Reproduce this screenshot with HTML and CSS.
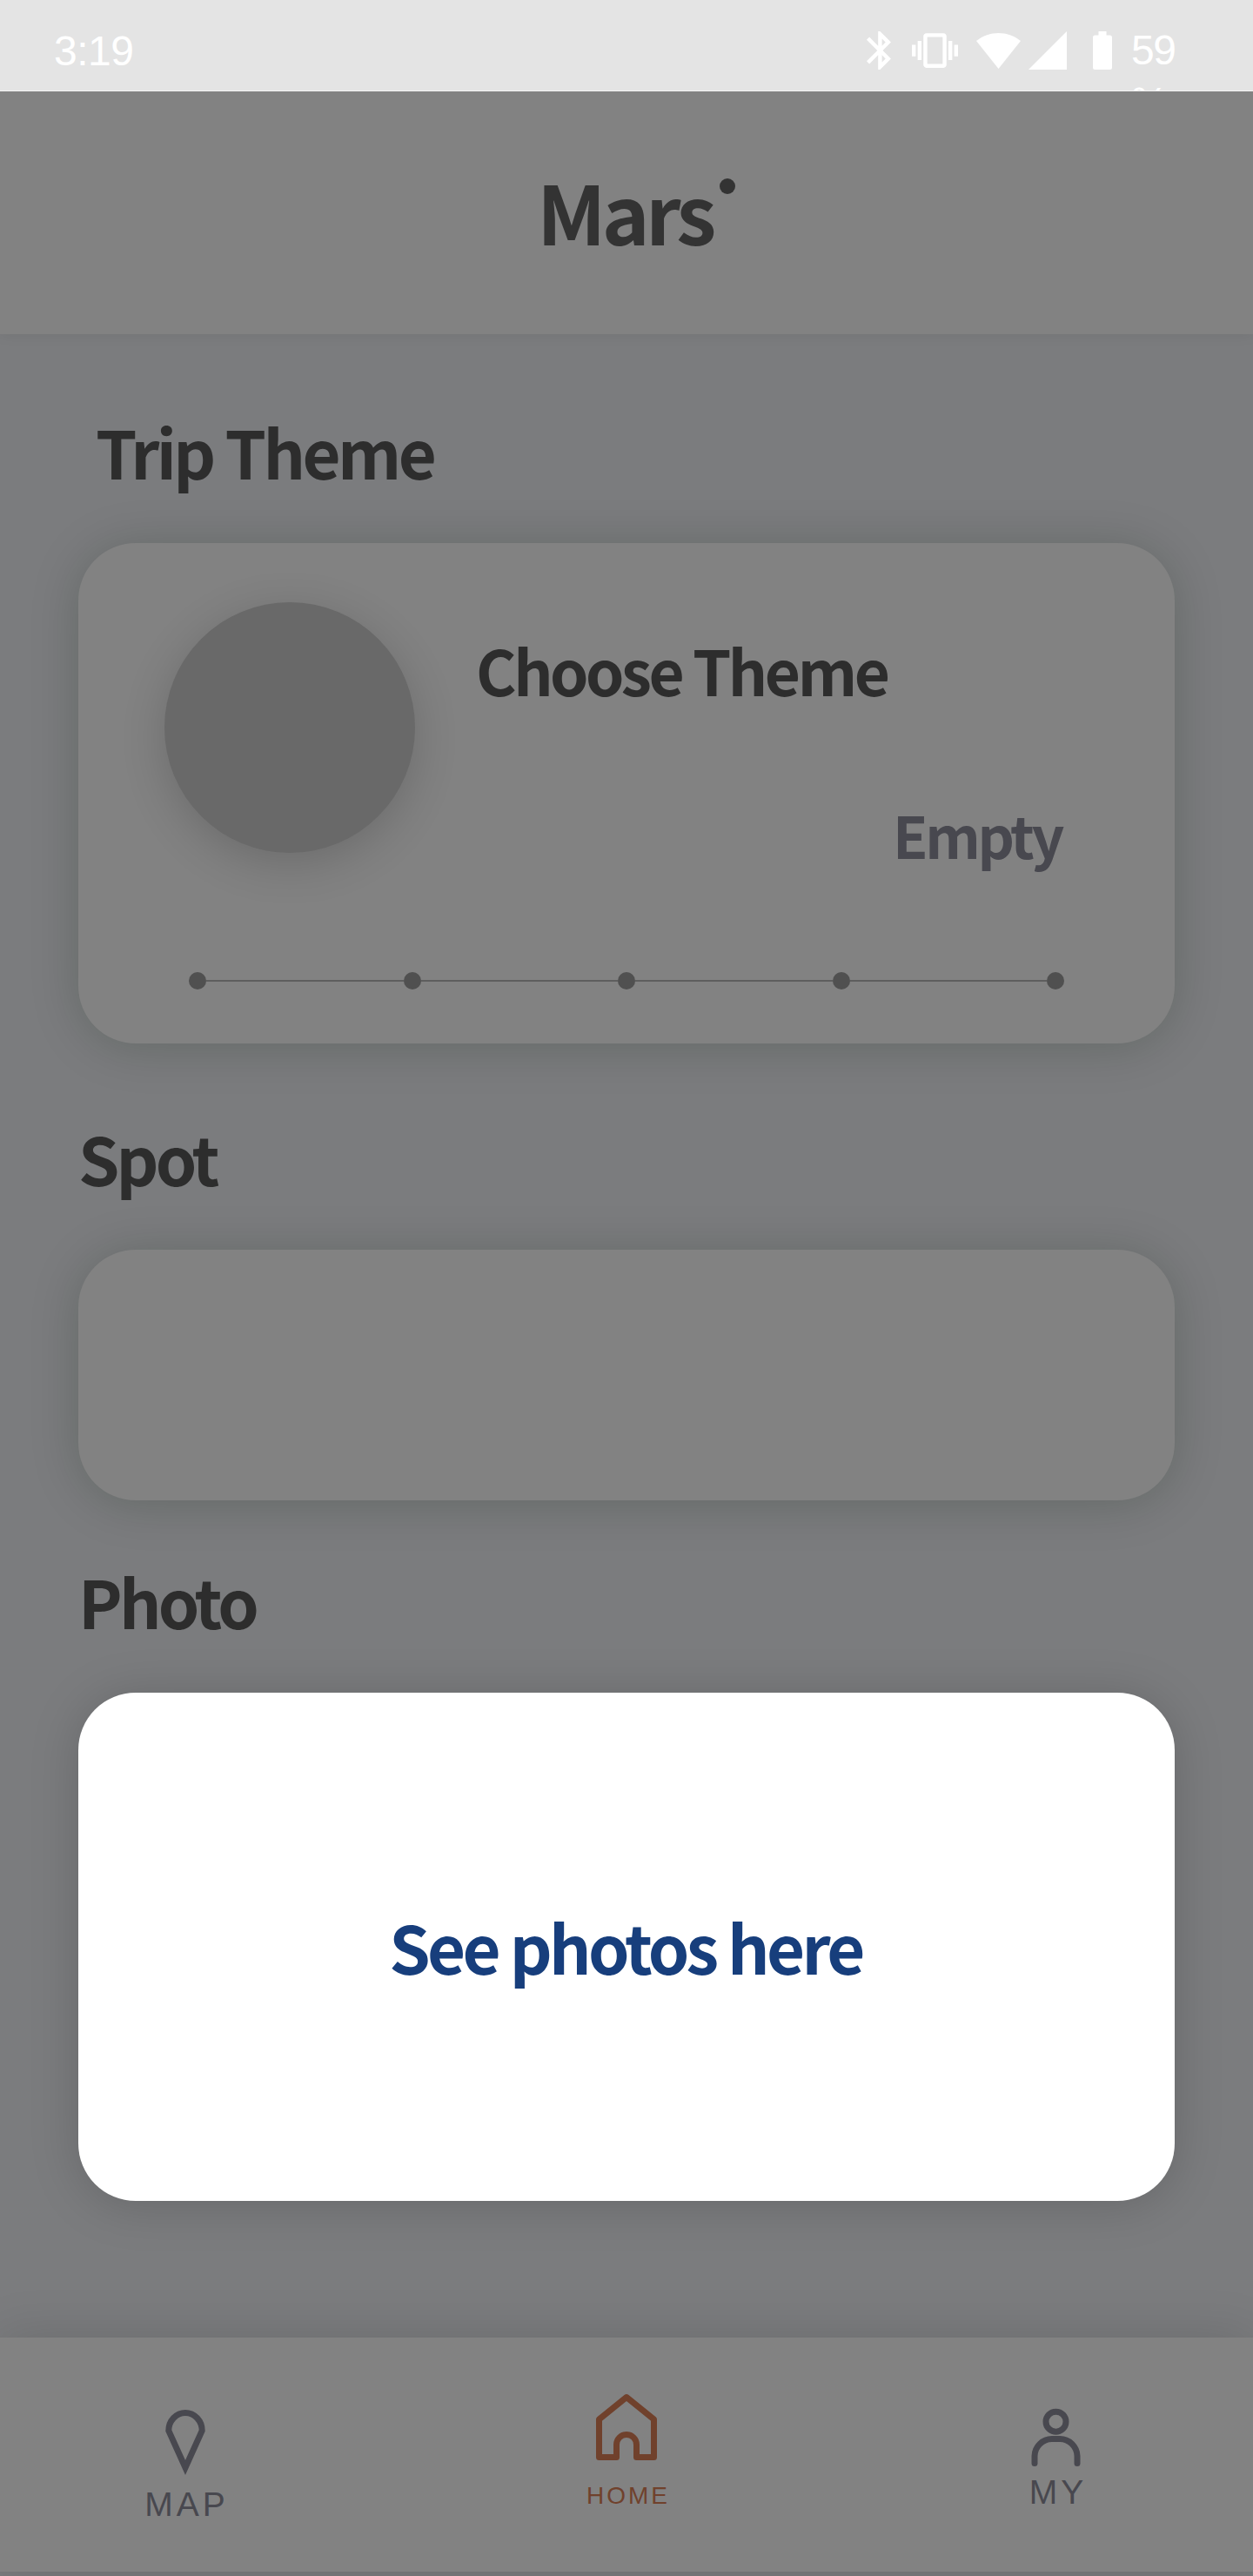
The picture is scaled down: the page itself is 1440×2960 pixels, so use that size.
FILE: index.html
```html
<!DOCTYPE html>
<html lang="en">
<head>
<meta charset="utf-8">
<title>Mars</title>
<link rel="stylesheet" href="styles.css">
</head>
<body>
<div class="status">
  <span class="clock">3:19</span>
  <div class="status-icons">
    <svg class="bluetooth" width="28" height="44" viewBox="5 2 12.730 20"><path fill="#fff" d="M17.710 7.710L12 2h-1v7.590L6.410 5 5 6.410 10.590 12 5 17.590 6.410 19 11 14.410V22h1l5.710-5.710-4.300-4.290 4.300-4.290zM13 5.830l1.880 1.880L13 9.590V5.830zm1.880 10.460L13 18.170v-3.760l1.880 1.880z"/></svg>
    <svg class="vibrate" width="53" height="40" viewBox="0 3 24 18"><path fill="#fff" d="M0 15h2V9H0v6zm3 2h2V7H3v10zm19-8v6h2V9h-2zm-3 8h2V7h-2v10zM16.500 3h-9C6.670 3 6 3.670 6 4.500v15c0 .83.67 1.500 1.500 1.500h9c.83 0 1.500-.67 1.500-1.500v-15c0-.83-.67-1.500-1.500-1.500zM16 19H8V5h8v14z"/></svg>
    <svg class="wifi" width="51" height="41" viewBox="0 0 51 41"><path fill="#fff" d="M0 9C15-3 36-3 51 9L25.500 41Z"/></svg>
    <svg class="signal" width="44" height="44" viewBox="0 0 44 44"><path fill="#fff" d="M44 0V44H0Z"/></svg>
    <svg class="battery" width="22" height="44" viewBox="0 0 22 44"><path fill="#fff" d="M6.500 0h9v4.500H19.500Q22 4.500 22 7v34.500Q22 44 19.500 44h-17Q0 44 0 41.500V7Q0 4.500 2.500 4.500h4Z"/></svg>
    <span class="level">59 %</span>
  </div>
</div>

<header class="header">
  <h1 class="brand">Mars</h1>
  <span class="brand-dot"></span>
</header>

<main class="main">
  <h2 class="heading heading-theme">Trip Theme</h2>
  <section class="card theme">
    <div class="theme-body">
      <div class="avatar"></div>
      <div class="theme-text">
        <p class="theme-name">Choose Theme</p>
        <p class="theme-state">Empty</p>
      </div>
    </div>
    <div class="timeline">
      <i class="dot"></i><i class="bar"></i><i class="dot"></i><i class="bar"></i><i class="dot"></i><i class="bar"></i><i class="dot"></i><i class="bar"></i><i class="dot"></i>
    </div>
  </section>

  <h2 class="heading heading-spot">Spot</h2>
  <section class="card spot"></section>

  <h2 class="heading heading-photo">Photo</h2>
  <section class="card photo"><p class="hint">See photos here</p></section>
</main>

<nav class="nav">
  <a class="tab tab-map">
    <svg width="50" height="80" viewBox="0 0 50 80" fill="none" stroke="currentColor" stroke-width="7"><path d="M5.800 27A19.200 20.500 0 1 1 44.200 27L25 69.500Z"/></svg>
    <span>MAP</span>
  </a>
  <a class="tab tab-home">
    <svg width="74" height="80" viewBox="0 0 74 80" fill="none" stroke="currentColor" stroke-width="7" stroke-linejoin="round"><path d="M37 5.500 68.500 31V74.500H48.500V60A11.500 11.500 0 0 0 25.500 60V74.500H5.500V31Z"/></svg>
    <span>HOME</span>
  </a>
  <a class="tab tab-my">
    <svg width="60" height="70" viewBox="0 0 60 70" fill="none" stroke="currentColor" stroke-width="7" stroke-linecap="round"><circle cx="29.500" cy="16.700" r="11.500"/><path d="M5 64.500V56A20 20 0 0 1 25 36.500H34A20 20 0 0 1 54 56V64.500"/></svg>
    <span>MY</span>
  </a>
</nav>
</body>
</html>
```
FILE: styles.css
```css
* { box-sizing: border-box; }

body {
  margin: 0;
  width: 1440px;
  height: 2960px;
  overflow: hidden;
  display: flex;
  flex-direction: column;
  background: #7b7c7e;
  color: #2d2d2d;
  font-family: "Noto Sans CJK KR", "Noto Sans", sans-serif;
}

h1, h2, p { margin: 0; font-weight: 700; }
svg { display: block; flex: none; }

.status {
  height: 105px;
  flex: none;
  display: flex;
  justify-content: space-between;
  padding: 0 60px 0 62px;
  background: #e4e4e4;
  border-bottom: 1px solid #f4f4f4;
  color: #fff;
  font: 48px/60px "Liberation Sans", Arial, sans-serif;
  overflow: hidden;
  position: relative;
  z-index: 2;
}
.clock { padding-top: 29px; letter-spacing: -0.5px; }
.status-icons { display: flex; align-items: flex-start; }
.bluetooth { margin: 36px 24px 0 0; }
.vibrate { margin: 38px 21px 0 0; }
.wifi { margin: 38px 9px 0 0; }
.signal { margin: 36px 30px 0 0; }
.battery { margin: 36px 22px 0 0; }
.level { width: 80px; padding-top: 28px; letter-spacing: -1.5px; }

.header {
  height: 279px;
  flex: none;
  display: flex;
  align-items: flex-start;
  gap: 10px;
  padding-left: 617px;
  background: #828282;
  box-shadow: 0 0 16px rgba(0, 20, 0, 0.08);
  position: relative;
  z-index: 1;
}
.brand {
  font-size: 93px;
  line-height: 273px;
  letter-spacing: -4.65px;
  width: 200px;
  color: #333;
}
.brand-dot {
  width: 18px;
  height: 18px;
  margin-top: 100px;
  border-radius: 50%;
  background: #333;
}

.main { height: 2302px; flex: none; padding: 79px 90px 0; }
.heading { font-size: 76px; line-height: 110px; margin-bottom: 51px; letter-spacing: -3.8px; }
.heading-theme { padding-left: 20px; letter-spacing: -3.55px; }
.heading-spot { margin-top: 76px; }
.heading-photo { margin-top: 60px; }

.card {
  border-radius: 66px;
  background: #828282;
  box-shadow: 0 4px 56px rgba(0, 28, 0, 0.19);
}
.theme { height: 575px; padding: 68px 127px 0 99px; }
.theme-body { display: flex; gap: 70px; height: 288px; }
.avatar {
  width: 288px;
  height: 288px;
  flex: none;
  border-radius: 50%;
  background: #696969;
  box-shadow: 0 12px 50px rgba(0, 0, 0, 0.17);
}
.theme-text { flex: 1; padding-top: 27px; white-space: nowrap; }
.theme-name { font-size: 71px; line-height: 100px; letter-spacing: -3.45px; }
.theme-state {
  margin-top: 91px;
  padding-left: 479px;
  font-size: 66px;
  line-height: 96px;
  letter-spacing: -3.3px;
  color: #48484f;
}
.timeline { display: flex; align-items: center; margin: 137px 0 0 28px; }
.dot { width: 20px; height: 20px; border-radius: 50%; background: #505050; }
.bar { flex: 1; height: 2px; background: #5e5e5e; }

.spot { height: 288px; }
.photo {
  height: 584px;
  background: #fff;
  text-align: center;
  box-shadow: 0 4px 56px rgba(0, 0, 0, 0.17);
}
.hint {
  padding-right: 2px;
  font-size: 76px;
  line-height: 582px;
  letter-spacing: -3.62px;
  color: #173e7c;
}

.nav {
  height: 269px;
  flex: none;
  display: grid;
  grid-template-columns: 425px 590px 398px;
  background: #828282;
  box-shadow: 0 0 56px rgba(0, 8, 0, 0.14);
}
.tab {
  display: flex;
  flex-direction: column;
  align-items: center;
  color: #48484f;
  font: 39px/40px "Liberation Sans", Arial, sans-serif;
  letter-spacing: 4px;
}
.tab span { margin-right: -4px; }
.tab-map { padding-top: 80px; }
.tab-map span { margin-top: 12px; }
.tab-home { padding-top: 63px; color: #70412c; }
.tab-home span { margin-top: 24px; font-size: 28px; line-height: 30px; letter-spacing: 3px; }
.tab-my { padding-top: 80px; }
.tab-my span { margin-top: 8px; }
```
